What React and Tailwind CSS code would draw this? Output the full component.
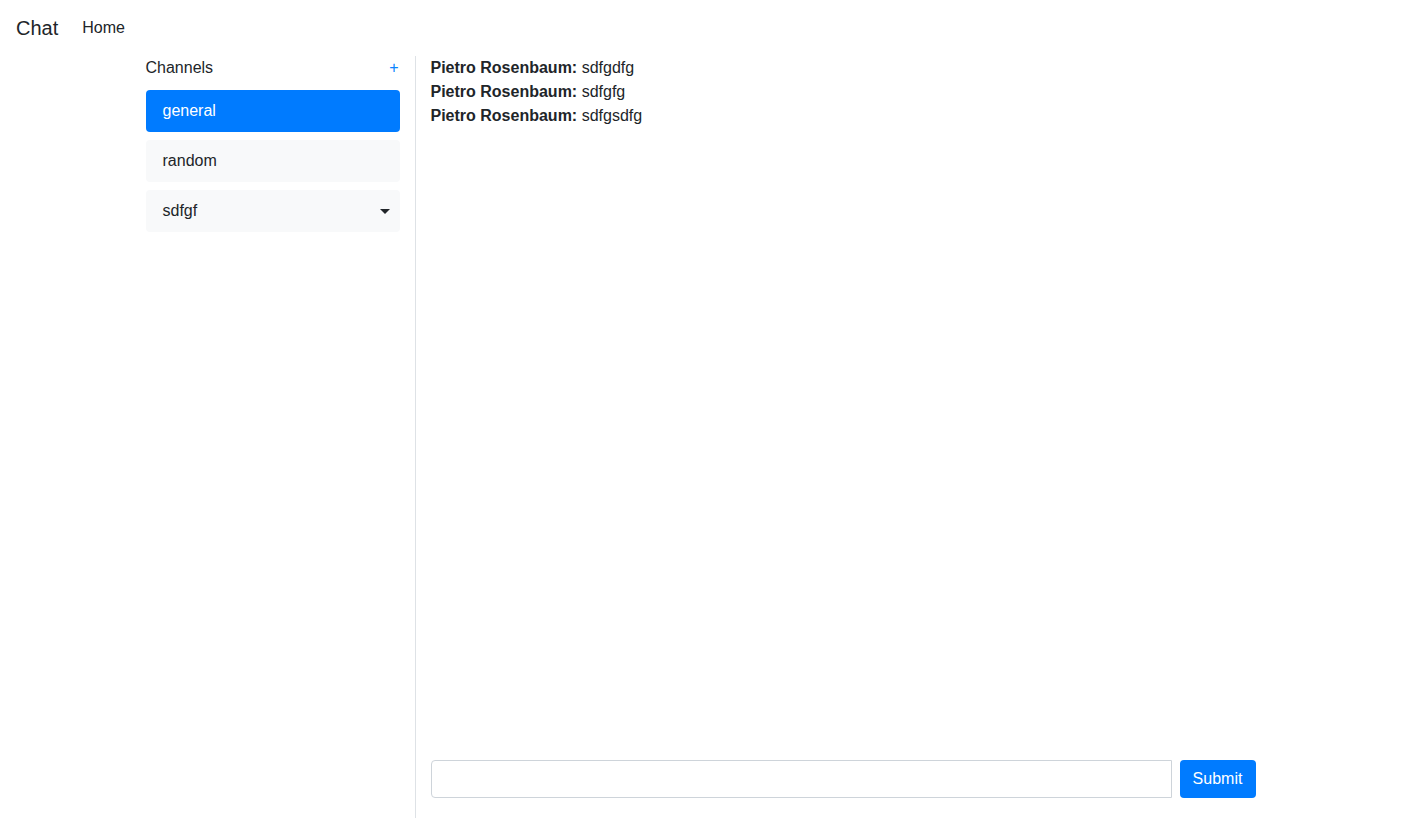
import React from 'react'

const font = { fontFamily: '"Liberation Sans", Arial, sans-serif' }

const channels = [
  { name: 'general', active: true },
  { name: 'random' },
  { name: 'sdfgf', removable: true },
]

const messages = [
  { user: 'Pietro Rosenbaum', text: 'sdfgdfg' },
  { user: 'Pietro Rosenbaum', text: 'sdfgfg' },
  { user: 'Pietro Rosenbaum', text: 'sdfgsdfg' },
]

const ChannelItem = ({ name, active, removable }) => (
  <div
    className={`flex items-center justify-between h-[42px] pl-[17px] pr-[10px] rounded mb-2 text-base ${
      active ? 'bg-[#007bff] text-white' : 'bg-[#f8f9fa] text-[#212529]'
    }`}
  >
    <span>{name}</span>
    {removable && (
      <span className="w-0 h-0 border-l-[5px] border-r-[5px] border-t-[5px] border-l-transparent border-r-transparent border-t-[#212529]" />
    )}
  </div>
)

export default function App() {
  return (
    <div className="w-full min-h-screen bg-white text-[#212529]" style={font}>
      {/* Navbar */}
      <nav className="flex items-center h-14 px-4">
        <span className="text-xl mr-6">Chat</span>
        <span className="text-base">Home</span>
      </nav>

      <div className="w-[1140px] mx-auto flex h-[762px]">
        {/* Channels */}
        <div className="w-[285px] px-[15px] border-r border-[#dee2e6]">
          <div className="flex items-center justify-between h-6 mb-[10px] text-base">
            <span>Channels</span>
            <span className="text-[#0a84ff] pr-[1px]">+</span>
          </div>
          {channels.map((c) => (
            <ChannelItem key={c.name} {...c} />
          ))}
        </div>

        {/* Chat */}
        <div className="flex-1 px-[15px] flex flex-col justify-between pb-5">
          <div className="text-base leading-6">
            {messages.map((m, i) => (
              <div key={i}>
                <b>{m.user}:</b> {m.text}
              </div>
            ))}
          </div>
          <form className="flex" onSubmit={(e) => e.preventDefault()}>
            <input
              className="flex-1 h-[38px] mr-2 px-3 border border-[#ced4da] rounded-l rounded-r-none outline-none"
              style={font}
            />
            <button
              type="submit"
              className="h-[38px] w-[76px] bg-[#007bff] text-white rounded text-base"
              style={font}
            >
              Submit
            </button>
          </form>
        </div>
      </div>
    </div>
  )
}
